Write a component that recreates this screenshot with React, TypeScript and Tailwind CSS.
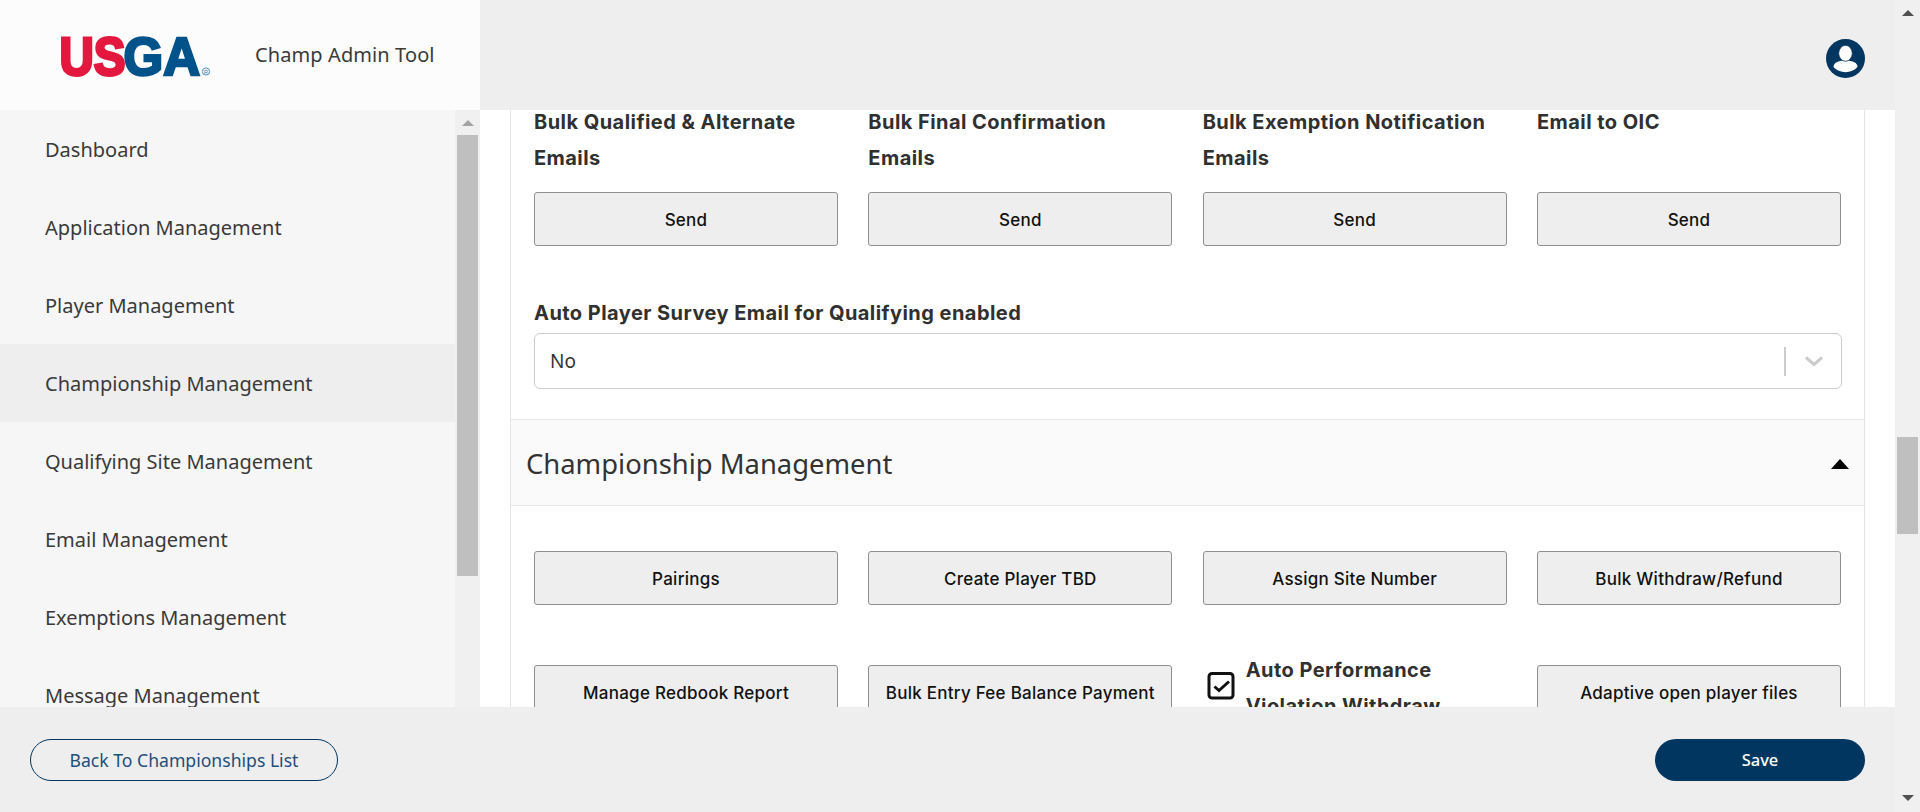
import React from "react";

const plex = "font-['Noto_Sans','Open_Sans',sans-serif]";
const work = "font-['Inter','Liberation_Sans',sans-serif]";

function Scrollbar({ thumbTop, thumbH, arrow, className }: { thumbTop: string; thumbH: string; arrow: string; className: string }) {
  return (
    <div className={`flex flex-col items-center w-[25px] shrink-0 bg-[#f0f0f0] ${className}`}>
      <svg width="12" height="6" viewBox="0 0 12 6" className={`mt-[10px] shrink-0 ${arrow}`}>
        <path d="M6 0L12 6H0Z" fill="currentColor" />
      </svg>
      <div className={`w-[21px] shrink-0 bg-[#bfbfbf] ${thumbTop} ${thumbH}`} />
    </div>
  );
}

function Btn({ children }: { children: React.ReactNode }) {
  return (
    <div className={`h-[54px] flex items-center justify-center pt-[3px] bg-[#eeeeee] border border-[#8f8f8f] rounded-[3px] text-[17px] tracking-[0.25px] font-[450] text-[#111] whitespace-nowrap ${work}`}>
      {children}
    </div>
  );
}

const Label = ({ children }: { children: React.ReactNode }) => (
  <div className={`text-[20px] leading-[36px] tracking-[0.45px] font-bold text-[#303030] ${work}`}>{children}</div>
);

const items = [
  "Dashboard",
  "Application Management",
  "Player Management",
  "Championship Management",
  "Qualifying Site Management",
  "Email Management",
  "Exemptions Management",
  "Message Management",
];

export default function App() {
  return (
    <div className={`flex w-full h-[812px] overflow-hidden bg-white ${plex}`}>
      <div className="flex flex-col flex-1 min-w-0 h-full">
        {/* Top bar */}
        <header className="flex h-[110px] shrink-0 bg-[#eeeeee]">
          <div className="flex items-center w-[480px] shrink-0 bg-[#fcfcfc]">
            <svg width="152" height="60" viewBox="0 0 152 60" className="ml-[60px] shrink-0" role="img" aria-label="USGA">
              <text x="63.5" y="49.5" fontFamily="Liberation Sans" fontWeight="700" fontSize="54" fill="#00528a" stroke="#00528a" strokeWidth="2.6" textLength="76.5" lengthAdjust="spacingAndGlyphs">GA</text>
              <text x="-0.5" y="49.5" fontFamily="Liberation Sans" fontWeight="700" fontSize="54" fill="#e4173e" stroke="#e4173e" strokeWidth="3" textLength="66" lengthAdjust="spacingAndGlyphs">US</text>
              <circle cx="146" cy="46.5" r="3.6" fill="none" stroke="#4d8fc0" strokeWidth="1" />
              <text x="146" y="48.6" textAnchor="middle" fontFamily="Liberation Sans" fontSize="5.5" fill="#2f79b0">R</text>
            </svg>
            <div className="ml-[43px] text-[20px] tracking-[0.1px] text-[#3a3a3a] whitespace-nowrap">Champ Admin Tool</div>
          </div>
          <div className="flex flex-1 items-center justify-end pr-[30px]">
            <svg width="39" height="39" viewBox="0 0 39 39" className="mt-[6px]">
              <circle cx="19.5" cy="19.5" r="19.5" fill="#003660" />
              <path d="M7.5 28C7.5 24 12 21.6 19.5 21.6S31.5 24 31.5 28C28.5 31.2 24.3 33.2 19.5 33.2S10.5 31.2 7.5 28Z" fill="#fff" />
              <ellipse cx="19.5" cy="14.3" rx="6.8" ry="8" fill="#fff" stroke="#003660" strokeWidth="0.8" />
            </svg>
          </div>
        </header>

        {/* Middle */}
        <div className="flex flex-1 min-h-0">
          <aside className="flex w-[480px] shrink-0">
            <nav className="flex-1 bg-[#f6f6f6] overflow-hidden">
              {items.map((t) => (
                <div
                  key={t}
                  className={`h-[78px] flex items-center pl-[45px] pt-[2px] text-[20px] text-[#3a3a3a] ${t === "Championship Management" ? "bg-[#eeeeee]" : ""}`}
                >
                  {t}
                </div>
              ))}
            </nav>
            <Scrollbar thumbTop="mt-[9px]" thumbH="h-[441px]" arrow="text-[#a3a3a3]" className="" />
          </aside>

          <main className="flex-1 min-w-0 overflow-hidden px-[30px]">
            <div className="-mt-[6px] border-x border-[#e4e4e4]">
              <div className="pl-[23px] pr-[23px]">
                <div className="grid grid-cols-4 gap-x-[30.33px]">
                  {[
                    "Bulk Qualified & Alternate Emails",
                    "Bulk Final Confirmation Emails",
                    "Bulk Exemption Notification Emails",
                    "Email to OIC",
                  ].map((t) => (
                    <div key={t}>
                      <div className="h-[88px] pr-[8px]">
                        <Label>{t}</Label>
                      </div>
                      <Btn>Send</Btn>
                    </div>
                  ))}
                </div>
                <div className="mt-[49px]">
                  <Label>Auto Player Survey Email for Qualifying enabled</Label>
                </div>
                <div className="mt-[2px] -mr-[1px] h-[56px] flex items-center border border-[#cccccc] rounded-[6px] pl-[15px] text-[19px] text-[#333]">
                  <span className="flex-1">No</span>
                  <span className="w-[2px] h-[29px] bg-[#cccccc]" />
                  <svg width="20" height="12" viewBox="0 0 20 12" className="ml-[18px] mr-[17px]">
                    <path d="M2 2.5L10 9.5L18 2.5" fill="none" stroke="#cccccc" strokeWidth="3" />
                  </svg>
                </div>
              </div>

              <div className="mt-[30px] h-[87px] flex items-center justify-between bg-[#fafafa] border-y border-[#e8e8e8] pl-[15px] pr-[15px]">
                <h2 className="pt-[2px] text-[27.4px] font-normal text-[#333]">Championship Management</h2>
                <svg width="18" height="10" viewBox="0 0 18 10" className="mt-[2px]">
                  <path d="M9 0L18 10H0Z" fill="#000" />
                </svg>
              </div>

              <div className="pl-[23px] pr-[23px] pt-[45px]">
                <div className="grid grid-cols-4 gap-x-[30.33px] gap-y-[60px]">
                  <Btn>Pairings</Btn>
                  <Btn>Create Player TBD</Btn>
                  <Btn>Assign Site Number</Btn>
                  <Btn>Bulk Withdraw/Refund</Btn>
                  <Btn>Manage Redbook Report</Btn>
                  <Btn>Bulk Entry Fee Balance Payment</Btn>
                  <div className="flex items-start -mt-[13px] pl-[4px]">
                    <svg width="28" height="28" viewBox="0 0 28 28" className="mt-[20px] shrink-0">
                      <rect x="2" y="1.5" width="24" height="24.5" rx="3" fill="#fff" stroke="#111" strokeWidth="3" />
                      <path d="M7.5 14.5L12 18.5L22 9.5" fill="none" stroke="#111" strokeWidth="3" />
                    </svg>
                    <div className="ml-[11px]">
                      <Label>Auto Performance Violation Withdraw</Label>
                    </div>
                  </div>
                  <Btn>Adaptive open player files</Btn>
                </div>
              </div>
            </div>
          </main>
        </div>

        {/* Footer */}
        <footer className="relative z-10 h-[105px] shrink-0 flex items-start justify-between bg-[#eeeeee] px-[30px] pt-[32px]">
          <div className="w-[308px] h-[42px] flex items-center justify-center rounded-full border border-[#003660] text-[17.6px] text-[#1f4e79]">
            Back To Championships List
          </div>
          <div className="w-[210px] h-[42px] flex items-center justify-center rounded-full bg-[#003660] text-[16.5px] font-medium text-white">
            Save
          </div>
        </footer>
      </div>

      {/* Page scrollbar */}
      <div className="relative">
        <Scrollbar thumbTop="mt-[421px]" thumbH="h-[97px]" arrow="text-[#505050]" className="h-full" />
        <svg width="12" height="6" viewBox="0 0 12 6" className="absolute left-[7px] bottom-[11px] text-[#505050]">
          <path d="M0 0H12L6 6Z" fill="currentColor" />
        </svg>
      </div>
    </div>
  );
}
